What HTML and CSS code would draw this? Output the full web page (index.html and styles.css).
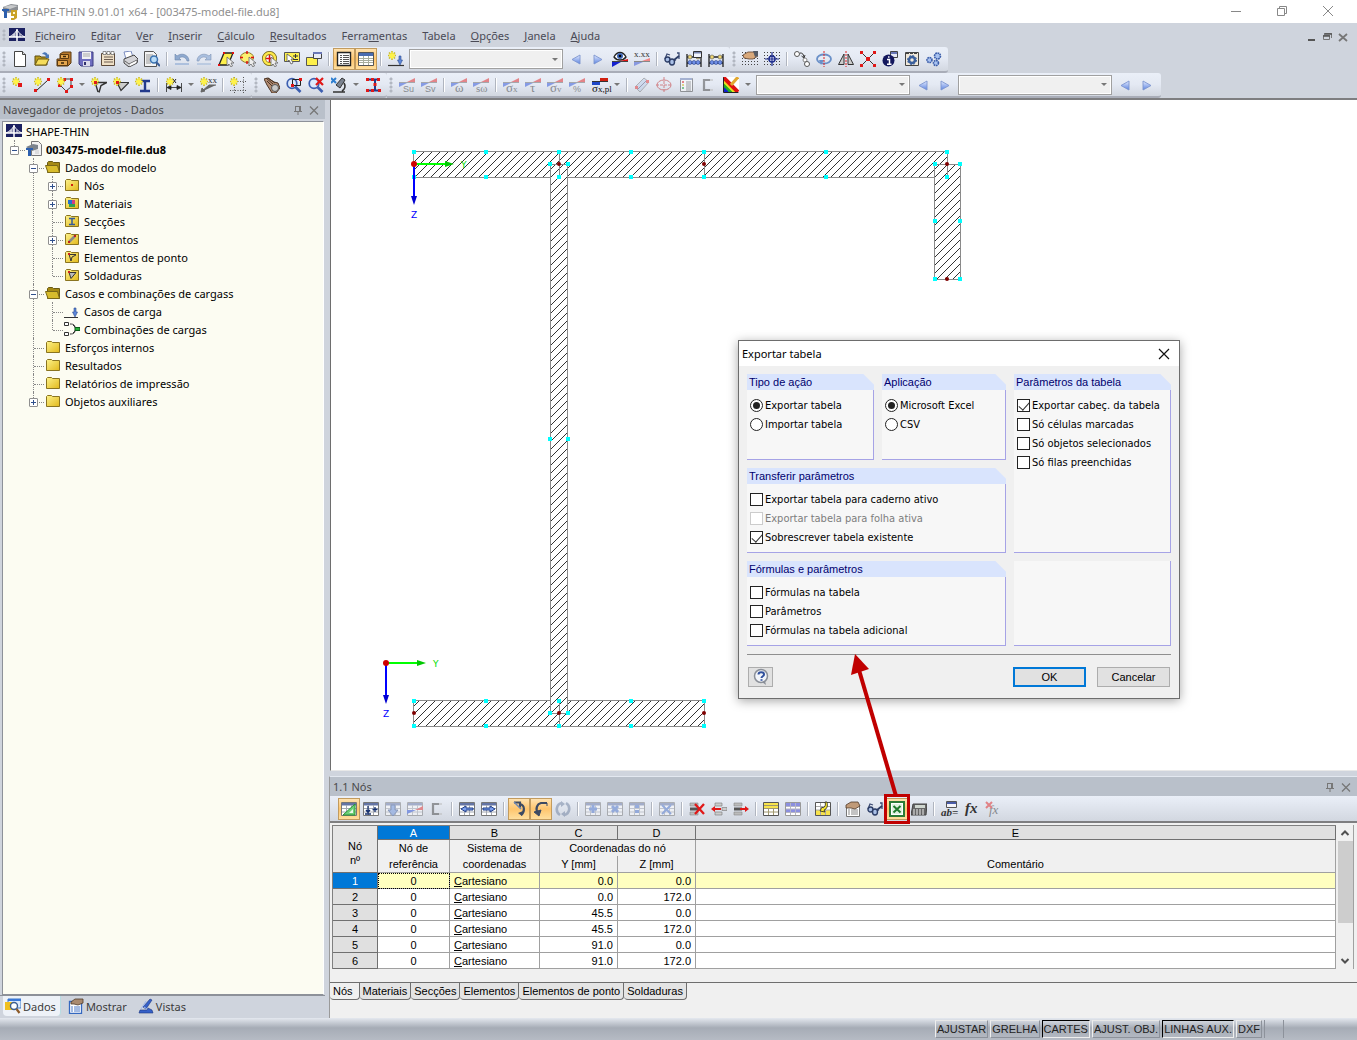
FILE: index.html
```html
<!DOCTYPE html>
<html lang="pt">
<head>
<meta charset="utf-8">
<title>SHAPE-THIN 9.01.01 x64 - [003475-model-file.du8]</title>
<link rel="stylesheet" href="styles.css">
</head>
<body>
<svg class="sprite" aria-hidden="true">
  <defs>
    <linearGradient id="gFold" x1="0" y1="0" x2="1" y2="1"><stop offset="0" stop-color="#fdf28a"/><stop offset="1" stop-color="#e2b91c"/></linearGradient>
    <linearGradient id="gBlue" x1="0" y1="0" x2="0" y2="1"><stop offset="0" stop-color="#e4ebff"/><stop offset="1" stop-color="#5b83e0"/></linearGradient>
    <pattern id="hatch" width="8" height="8" patternUnits="userSpaceOnUse"><path d="M-1 9 9-1M-1 1 1-1M7 9 9 7" stroke="#333" stroke-width="1"/></pattern>
  </defs>
  <symbol id="star" viewBox="0 0 16 16"><path d="M4 0v9M0 4.500h8M1 1.500l6 6M7 1.500l-6 6" stroke="#c9bb2a" stroke-width="1.600"/><path d="M4 1v7M1 4.500h6M2 2.500l4 4M6 2.500l-4 4" stroke="#fff34a" stroke-width="1.300"/></symbol>
  <symbol id="logo" viewBox="0 0 16 16"><path fill="#1c2161" d="M0 1h16v13H0z"/><path d="M0 10h16M8 2v12" stroke="#fff" stroke-width="1.500"/><path d="M8 3C6 6 3 9 0 10M8 3c2 3 5 6 8 7M5 7v3M11 7v3" stroke="#fff" fill="none"/><path d="M8 3C6 6 3 9 1 10h7z" fill="#fff" opacity=".5"/></symbol>
  <symbol id="app" viewBox="0 0 16 16"><path d="M1 3 9 0l7 1v5l-9 3-6-1z" fill="#8b8f94"/><path d="M1 3l8-2 7 1-8 3z" fill="#c8cacc"/><path d="M0 5h7v2H5v7H2V7H0z" fill="#2c5fae"/><path d="M9 6h6v8l-3 2H9v-2h3v-2H9z" fill="#c9a227"/><path d="M11 8h2v2h-2z" fill="#fff5cf"/></symbol>
  <symbol id="new" viewBox="0 0 16 16"><path d="M2.500.500h8l3 3v12h-11z" fill="#fff" stroke="#444"/><path d="M10.500.500v3h3" fill="#ddd" stroke="#444"/></symbol>
  <symbol id="open" viewBox="0 0 16 16"><path d="M1 14V5h5l1 1h6v8z" fill="#b99a1e" stroke="#5c4c10"/><path d="M1 14 4 8h11l-3 6z" fill="#f5dc5a" stroke="#6d5a12"/><path d="M8 3c2-3 5-2 6 1l1-1v4h-4l1-1C12 4 10 3 8 3z" fill="#4a78b8"/></symbol>
  <symbol id="cab" viewBox="0 0 16 16"><path d="M4 3l3-2h8v11l-3 3H1V8h3z" fill="#b97a2c" stroke="#5b3a10"/><path d="M4.500 3.500h8v4h-8zM1.500 9.500h10v5h-10z" fill="#e6a84e" stroke="#5b3a10"/><path d="M7 5.500h3M5 12h3" stroke="#3b260a" stroke-width="1.500"/></symbol>
  <symbol id="save" viewBox="0 0 16 16"><path d="M1 1h14v14H3l-2-2z" fill="#6f6ec0" stroke="#3d3d80"/><path d="M4 1h9v7H4z" fill="#f0f0f4"/><path d="M5 3h7M5 5h7" stroke="#aaa"/><path d="M5 10h7v5H5z" fill="#dcdcec"/><path d="M6 11h2v3H6z" fill="#32326e"/></symbol>
  <symbol id="note" viewBox="0 0 16 16"><path d="M1.500 2.500h13v12h-13z" fill="#efe0c6" stroke="#5c4a3a"/><path d="M3 .500h3v3H3zM7 .500h3v3H7zM11 .500h3v3h-3z" fill="#fff" stroke="#666" stroke-width=".7"/><path d="M4 6h9M4 8.500h9M4 11h9" stroke="#6c5c50"/></symbol>
  <symbol id="print" viewBox="0 0 16 16"><path d="M2 1l7-1 2 6-7 2z" fill="#fff" stroke="#7b8cc0"/><path d="M2 8l10-4 4 4-1 4-8 4-5-4z" fill="#d4d4d8" stroke="#444"/><path d="M3 10l4 3 8-4" stroke="#666" fill="none"/><path d="M8 13l6-3v2l-6 3z" fill="#fff"/></symbol>
  <symbol id="preview" viewBox="0 0 16 16"><path d="M.500.500h9l3 3v12H.500z" fill="#f4f4f4" stroke="#555"/><path d="M2 4h7M2 6h5M2 8h4M2 10h4M2 12h5" stroke="#999"/><circle cx="10" cy="8.500" r="3.500" fill="#b9dcf8" stroke="#3a72b0" stroke-width="1.500"/><path d="M12 11l4 4" stroke="#3a5f98" stroke-width="2.200"/></symbol>
  <symbol id="undo" viewBox="0 0 16 16"><path d="M1 3v6h6L5 7c3-2 7-1 8 3h2C15 4 8 1 3 5z" fill="#8ea9cf" stroke="#6d86ab" stroke-width=".6"/><path d="M1 13h14" stroke="#9db5d8" stroke-width="1.500"/></symbol>
  <symbol id="redo" viewBox="0 0 16 16"><path d="M15 3v6H9l2-2C8 5 4 6 3 10H1C1 4 8 1 13 5z" fill="#a9bfdf" stroke="#8195b5" stroke-width=".6"/><path d="M1 13h14" stroke="#b0c3de" stroke-width="1.500"/></symbol>
  <symbol id="cursor" viewBox="0 0 16 16"><path d="M9 6v9l2-2 2 3 1.500-1-1.500-3h3z" fill="#eee" stroke="#666" stroke-width=".8"/></symbol>
  <symbol id="selpar" viewBox="0 0 16 16"><path d="M1 14 6 2h9l-5 12z" fill="#fdf04c" stroke="#222" stroke-width="1.300"/><path d="M0 13h2v2H0zM5 1h2v2H5zM14 1h2v2h-2z" fill="#e01010"/><use href="#cursor"/></symbol>
  <symbol id="selcirc" viewBox="0 0 16 16"><ellipse cx="7" cy="6.500" rx="6.500" ry="5" fill="#fdf070" stroke="#8a7c30"/><path d="M7 0v3M7 10v3M0 6.500h3M11 6.500h3" stroke="#e01010" stroke-width="1.500"/><use href="#cursor"/></symbol>
  <symbol id="selring" viewBox="0 0 16 16"><circle cx="7.500" cy="7.500" r="5.500" fill="#fff" stroke="#6a5c10" stroke-width="4"/><circle cx="7.500" cy="7.500" r="5.500" fill="none" stroke="#fde84c" stroke-width="2.600"/><path d="M7.500 4v7M4 7.500h7" stroke="#e01010" stroke-width="1.500"/><use href="#cursor"/></symbol>
  <symbol id="selpm" viewBox="0 0 16 16"><path d="M.500 1.500h15v9H.500z" fill="#fdf04c" stroke="#555"/><path d="M9 5h5M11.500 3v4M9 8.500h5" stroke="#333"/><path d="M3 3v8l2-2 2 4 2-1-2-4h3z" fill="#fff" stroke="#555" stroke-width=".8"/></symbol>
  <symbol id="selwin" viewBox="0 0 16 16"><path d="M.500 6.500h11v8H.500z" fill="#fdf04c" stroke="#555"/><path d="M7.500 1.500h8v6h-8z" fill="#e8ecf8" stroke="#444"/><path d="M7 1h9v2H7z" fill="#6a78b8"/></symbol>
  <symbol id="nav" viewBox="0 0 16 16"><path d="M1.500 1.500h13v13h-13z" fill="#fff" stroke="#222" stroke-width="1.400"/><path d="M4 4.500h2M7 4.500h6M4 6.500h2M7 6.500h6M4 8.500h2M7 8.500h6M4 10.500h2M7 10.500h6M4 12.500h2M7 12.500h6" stroke="#555"/></symbol>
  <symbol id="tab" viewBox="0 0 16 16"><path d="M.500 1.500h15v13H.500z" fill="#fff" stroke="#555"/><path d="M1 2h14v3H1z" fill="#4a6cb0"/><path d="M1 7.500h14M1 9.500h14M1 11.500h14M5.500 5v9M10.500 5v9" stroke="#a7ad9e"/></symbol>
  <symbol id="starload" viewBox="0 0 16 16"><use href="#star"/><path d="M0 14.500h16" stroke="#333" stroke-width="1.200"/><path d="M11 5h2v4h1.500L12 14 9.500 9H11z" fill="#5c86d8" stroke="#2b4b90" stroke-width=".6"/></symbol>
  <symbol id="left" viewBox="0 0 16 16"><path d="M12 4v9L4 8.500z" fill="url(#gBlue)" stroke="#7d95cf" stroke-width=".9"/></symbol>
  <symbol id="right" viewBox="0 0 16 16"><path d="M4 4v9l8-4.500z" fill="url(#gBlue)" stroke="#7d95cf" stroke-width=".9"/></symbol>
  <symbol id="wedge" viewBox="0 0 16 16"><path d="M0 5.500h16" stroke="#666"/><path d="M8 5 16 1v4z" fill="#e02020"/><path d="M0 6h8L0 10z" fill="#2a50d8"/></symbol>
  <symbol id="eye" viewBox="0 0 16 16"><path d="M2 6c3-6 9-6 12 0-3 4-9 4-12 0z" fill="#fff" stroke="#222" stroke-width="1.300"/><circle cx="8" cy="5" r="3" fill="#3d65b5"/><circle cx="8" cy="5" r="1.300" fill="#000"/><path d="M0 10.500h16" stroke="#444"/><path d="M8 10l8-2v2z" fill="#e01010"/><path d="M0 11h9l-9 5z" fill="#1420d0"/></symbol>
  <symbol id="lowwedge" viewBox="0 0 16 16"><path d="M0 10.500h16" stroke="#888"/><path d="M8 10l8-3v3z" fill="#f08888"/><path d="M0 11h9l-9 4z" fill="#8898e0"/></symbol>
  <symbol id="glass" viewBox="0 0 16 16"><path d="M1 8 3 3l3 1M9 10l3-1M15 8V2h-2" stroke="#3d4c74" fill="none" stroke-width="1.300"/><circle cx="3.500" cy="8.500" r="2.500" fill="#a9bfe6" stroke="#2c3d66" stroke-width="1.400"/><ellipse cx="8" cy="11" rx="2.500" ry="3" fill="#a9bfe6" stroke="#2c3d66" stroke-width="1.400"/><path d="M10 9l5-4" stroke="#2c3d66" stroke-width="1.800"/></symbol>
  <symbol id="abacus" viewBox="0 0 16 16"><path d="M1 3v13M15 3v13M1 6h14M1 12h14" stroke="#222" stroke-width="1.300"/><g fill="#ecd470" stroke="#555" stroke-width=".6"><circle cx="4" cy="6" r="2"/><circle cx="12" cy="6" r="2"/></g><g fill="#6f8fe8" stroke="#27408c" stroke-width=".6"><circle cx="4" cy="11.500" r="2"/><circle cx="8" cy="11.500" r="2"/><circle cx="12" cy="11.500" r="2"/></g></symbol>
  <symbol id="abawin" viewBox="0 0 16 16"><use href="#abacus"/><path d="M7.500.500h8v6h-8z" fill="#f2f4fa" stroke="#333"/><path d="M8 1h7v1.500H8z" fill="#7886b0"/></symbol>
  <symbol id="grid" viewBox="0 0 16 16"><path d="M0 1.500h16M0 4.500h16M0 7.500h16M0 10.500h16M0 13.500h16" stroke="#444" stroke-dasharray="1 2"/></symbol>
  <symbol id="gridhand" viewBox="0 0 16 16"><use href="#grid"/><path d="M1 4l5-3h9l1 4-5 3H7L2 7z" fill="#d9a97c" stroke="#5f4330" stroke-width=".8"/><path d="M11 0h5v5l-3 1z" fill="#555b66"/></symbol>
  <symbol id="gridtgt" viewBox="0 0 16 16"><use href="#grid"/><circle cx="8" cy="8" r="3" fill="#eef" stroke="#1c2b8c" stroke-width="1.500"/><path d="M8 1v14M1 8h14" stroke="#1c2b8c" stroke-width="1.200"/></symbol>
  <symbol id="move" viewBox="0 0 16 16"><circle cx="3" cy="3" r="2.500" fill="#fff" stroke="#555"/><circle cx="11" cy="9" r="2" fill="#fff" stroke="#888"/><circle cx="13" cy="13" r="2.500" fill="#fff" stroke="#555"/><path d="M6 2c3 0 3 1 4 4M10 7 7.500 5M10 7l1-3" stroke="#333" fill="none"/></symbol>
  <symbol id="rotate" viewBox="0 0 16 16"><ellipse cx="8" cy="8" rx="7" ry="4.500" fill="none" stroke="#6a90c8" stroke-width="1.800"/><path d="M3 9h5l-3 5z" fill="#6a90c8"/><path d="M8 0v16" stroke="#e02020" stroke-dasharray="2 1"/></symbol>
  <symbol id="mirror" viewBox="0 0 16 16"><path d="M.500 13.500 6 3v10.500zM15.500 13.500 10 3v10.500z" fill="#ccc" stroke="#333"/><path d="M8 0v16" stroke="#e02020" stroke-dasharray="2 1"/></symbol>
  <symbol id="xnode" viewBox="0 0 16 16"><path d="M2 2l12 12M14 2 2 14" stroke="#333"/><path d="M0 0h3v3H0zM13 0h3v3h-3zM0 13h3v3H0zM13 13h3v3h-3zM6 6h4v4H6z" fill="#e01818"/></symbol>
  <symbol id="info" viewBox="0 0 16 16"><path d="M8.500.500h7v6h-7z" fill="#e8ecf8" stroke="#444"/><path d="M9 1h6v2H9z" fill="#6a78b8"/><circle cx="6.500" cy="9.500" r="6" fill="#14185e"/><path d="M5 8.500h2.500V13M5 13.200h4.500M6 6h1.500" stroke="#fff" stroke-width="1.500" fill="none"/></symbol>
  <symbol id="gearbox" viewBox="0 0 16 16"><path d="M1.500 1.500h13v13h-13z" fill="#f0e8da" stroke="#444"/><path d="M2 2h3M6 2h3M10 2h3" stroke="#444" stroke-width="2"/><circle cx="8" cy="9" r="3" fill="none" stroke="#3a5f9c" stroke-width="2.500"/><circle cx="8" cy="9" r="4.500" fill="none" stroke="#3a5f9c" stroke-dasharray="2 1.500"/></symbol>
  <symbol id="gears" viewBox="0 0 16 16"><g fill="#a8c2f0" stroke="#3a5ca8" stroke-width="1.600" stroke-dasharray="1.700 .6"><circle cx="3.500" cy="9" r="2.500"/><circle cx="11.500" cy="5" r="3"/><circle cx="10" cy="12" r="2.500"/></g></symbol>
  <symbol id="snode" viewBox="0 0 16 16"><use href="#star"/><path d="M6 6h4v4H6z" fill="#e01818"/></symbol>
  <symbol id="sline" viewBox="0 0 16 16"><path d="M2 14 14 3" stroke="#222"/><path d="M0 12h3v3H0zM13 1h3v3h-3z" fill="#e01818"/><use href="#star"/></symbol>
  <symbol id="spoly" viewBox="0 0 16 16"><path d="M3 8l6 6 5-4V2H7" stroke="#444" fill="none"/><path d="M6 1h3v3H6zM13 1h3v3h-3zM13 8h3v3h-3zM8 13h3v3H8zM1 7h3v3H1z" fill="#e01818"/><use href="#star"/></symbol>
  <symbol id="spoint" viewBox="0 0 16 16"><path d="M2 5.500h14l-6 3-2 7M4 5l3 10" stroke="#333" fill="none" stroke-width="1.400"/><use href="#star"/><path d="M3 4h3v3H3z" fill="#e01818"/></symbol>
  <symbol id="sweld" viewBox="0 0 16 16"><path d="M4 5.500h12l-8 8z" stroke="#333" fill="#ccc" stroke-width="1.200"/><use href="#star"/><path d="M3 4h3v3H3z" fill="#e01818"/></symbol>
  <symbol id="sbeam" viewBox="0 0 16 16"><path d="M5 4h10M5 14h10M10 4v10" stroke="#233a8c" stroke-width="2.400"/><use href="#star"/></symbol>
  <symbol id="sdim" viewBox="0 0 16 16"><path d="M.500 6v9M15.500 6v9M1 10.500h14M1 10.500l4-2v4zM15 10.500l-4-2v4z" stroke="#222" fill="#222" stroke-width=".8"/><path d="M7 2l3 4M10 2 7 6" stroke="#222"/><use href="#star"/></symbol>
  <symbol id="sxx" viewBox="0 0 16 16"><path d="M1 15 9 8h7M1 15l1-4 3 3z" stroke="#666" fill="#666"/><use href="#star"/></symbol>
  <symbol id="sbox" viewBox="0 0 16 16"><path d="M4.500 0v16M13.500 0v16M0 4.500h16M0 13.500h16" stroke="#555" stroke-dasharray="1 1.500"/><use href="#star"/></symbol>
  <symbol id="hand" viewBox="0 0 16 16"><path d="M0 2 4 1l6 4 4 1 2 5-4 5H8L3 8z" fill="#b48d74" stroke="#4a3424"/><path d="M2 1l7 6M4 1l7 5M3 4l5 5" stroke="#4a3424"/><circle cx="11" cy="11" r="3.500" fill="#c9c9c9" stroke="#555"/></symbol>
  <symbol id="mag" viewBox="0 0 16 16"><circle cx="6" cy="6.500" r="4.800" fill="#dce9fb" stroke="#3c5eb0" stroke-width="1.700"/><path d="M9.500 10l5 5" stroke="#3c5eb0" stroke-width="2.600"/></symbol>
  <symbol id="zoomw" viewBox="0 0 16 16"><use href="#mag"/><path d="M6.500 2.500h8v6h-8z" fill="none" stroke="#222"/><path d="M13 1h3v3h-3zM5 7h3v3H5z" fill="#e01818"/></symbol>
  <symbol id="zoomx" viewBox="0 0 16 16"><use href="#mag"/><path d="M8 1l7 7M15 1 8 8" stroke="#e01818" stroke-width="2.200"/></symbol>
  <symbol id="scope" viewBox="0 0 16 16"><path d="M11 1l3 2-5 8-4-3z" fill="#7b8390" stroke="#333"/><path d="M2 15h12M13 6c2 3 1 6-2 8" stroke="#333" stroke-width="1.600" fill="none"/><path d="M0 1l5 5M5 1 0 6" stroke="#2f7fd0" stroke-width="2"/></symbol>
  <symbol id="ired" viewBox="0 0 16 16"><path d="M3 2.500h10M3 13.500h12M10 2v12" stroke="#233a8c" stroke-width="2"/><path d="M1 1h3v3H1zM12 1h3v3h-3zM6 1h3v3H6zM1 12h3v3H1zM13 12h3v3h-3zM6 12h3v3H6zM8.500 6h3v3h-3z" fill="#e01818"/></symbol>
  <symbol id="sigpl" viewBox="0 0 16 16"><path d="M8 1h8v3H8z" fill="#d02010"/><path d="M0 5h8v3H0z" fill="#2048c8"/><path d="M0 4.500h16" stroke="#333"/></symbol>
  <symbol id="plate" viewBox="0 0 16 16"><path d="M1 10 10 1l5 4-9 10z" fill="#b9cbe8" stroke="#777"/><path d="M4 12l9-9" stroke="#557"/><path d="M1 9h3v3H1zM12 3h3v3h-3z" fill="#e03030"/></symbol>
  <symbol id="ell" viewBox="0 0 16 16"><ellipse cx="8" cy="8" rx="7" ry="5" fill="none" stroke="#c02020"/><path d="M8 0v16M0 8h16" stroke="#c02020" stroke-dasharray="3 1"/></symbol>
  <symbol id="rep" viewBox="0 0 16 16"><path d="M2.500 1.500h12v13h-12z" fill="#fff" stroke="#444"/><path d="M2 1h12v2H2z" fill="#667ab0"/><path d="M4 5h2" stroke="#e02020" stroke-width="2"/><path d="M4 8h2" stroke="#d8c020" stroke-width="2"/><path d="M4 11h2" stroke="#20a040" stroke-width="2"/><path d="M8 5h5M8 7h5M8 9h5M8 11h5M8 13h5" stroke="#555"/></symbol>
  <symbol id="chan" viewBox="0 0 16 16"><path d="M13 3H4v10h9" stroke="#444" stroke-width="2.200" fill="none"/><path d="M10 3h3M10 13h3" stroke="#bbb" stroke-width="2.200"/></symbol>
  <symbol id="rain" viewBox="0 0 16 16"><path fill="#fff" d="M0 0h16v16H0z"/><path d="M0 4 12 16" stroke="#e8e020" stroke-width="4"/><path d="M0 0l15 15" stroke="#e01010" stroke-width="4"/><path d="M0 8l8 8" stroke="#20b020" stroke-width="3.500"/><path d="M0 12l4 4" stroke="#1020d0" stroke-width="4"/><path d="M8 8 15 0" stroke="#e2a830" stroke-width="3"/><path d="M.500.500v15h15" stroke="#222" fill="none"/></symbol>
  <symbol id="fold" viewBox="0 0 16 16"><path d="M1.500 13.500v-10l1-1h4l1 1h7v10z" fill="url(#gFold)" stroke="#8a7420"/></symbol>
  <symbol id="foldo" viewBox="0 0 16 16"><path d="M2.500 13.500v-10l1-1h4l1 1h6v10z" fill="#a58a14" stroke="#6a5a14"/><path d="M.500 6.500h12l2 7H3z" fill="#d8bc2c" stroke="#7a6818"/></symbol>
  <symbol id="f1" viewBox="0 0 16 16"><use href="#fold"/><path d="M7 7h2v2H7z" fill="#d02010"/></symbol>
  <symbol id="f2" viewBox="0 0 16 16"><use href="#fold"/><path d="M4 5h4v4H4z" fill="#2470d0"/><path d="M8 5h3v4H8z" fill="#d04080"/><path d="M5 9h6v3H5z" fill="#30a050"/></symbol>
  <symbol id="f3" viewBox="0 0 16 16"><use href="#fold"/><path d="M5 5.500h6M5 11.500h6M8 5v7" stroke="#355a98" stroke-width="1.500"/></symbol>
  <symbol id="f4" viewBox="0 0 16 16"><use href="#fold"/><path d="M5 11l6-6" stroke="#888" stroke-width="2.500"/><path d="M4 10h2v2H4zM10 4h2v2h-2z" fill="#c02020"/></symbol>
  <symbol id="f5" viewBox="0 0 16 16"><use href="#fold"/><path d="M4 5.500h8M5 5l2 7 1-4 4-2" stroke="#333" fill="none"/><path d="M4 4h2v2H4z" fill="#d02020"/></symbol>
  <symbol id="f6" viewBox="0 0 16 16"><use href="#fold"/><path d="M5 5.500h7l-5 6z" stroke="#333" fill="#bbb"/><path d="M4 4h2v2H4z" fill="#d02020"/></symbol>
  <symbol id="file" viewBox="0 0 16 16"><path d="M5.500.500h7l3 3v11h-10z" fill="#f2f2f2" stroke="#777"/><path d="M0 6 7 3l5 1v4l-6 2z" fill="#7c838c"/><path d="M0 7h7v2H5v6H2V9H0z" fill="#2c5fae"/><path d="M9 9h4v4H9z" fill="#ddd"/></symbol>
  <symbol id="load" viewBox="0 0 16 16"><path d="M0 14.500h14" stroke="#333"/><path d="M10 5h2v4h1.500L11 14 8.500 9H10z" fill="#5c86d8" stroke="#2b4b90" stroke-width=".6"/></symbol>
  <symbol id="comb" viewBox="0 0 16 16"><path d="M.500 1.500h4v3h-4zM.500 11.500h4v3h-4z" fill="#fff" stroke="#333"/><path d="M6 3c4 0 5 1 5 4M6 13c4 0 5-1 5-4M9 4l3 3M9 12l3-3" stroke="#333" fill="none"/><path d="M11 6.500h5v3h-5z" fill="#28b038" stroke="#0c5c18"/></symbol>
  <symbol id="tgrid" viewBox="0 0 16 16"><path d="M.500 1.500h15v13H.500z" fill="#fff" stroke="#777"/><path d="M1 2h14v2.500H1z" fill="#6474a4"/><path d="M1 7.500h14M1 11h14M5.500 4v10M10.500 4v10" stroke="#a5a9b2"/></symbol>
  <symbol id="t1" viewBox="0 0 16 16"><use href="#tgrid"/><path d="M2 14 14 3v11z" fill="#6fd078" stroke="#2a9434"/><path d="M8 12l4-4v4z" fill="#e9f8e9"/></symbol>
  <symbol id="t2" viewBox="0 0 16 16"><use href="#tgrid"/><path d="M5 5v6M3 9l2 2.500L7 9M2 13h6M12 6v5M9.500 8.500h5" stroke="#16306e" stroke-width="1.300" fill="none"/></symbol>
  <symbol id="t3" viewBox="0 0 16 16"><use href="#tgrid"/><path d="M6 4h4v5h3l-5 6-5-6h3z" fill="#6f94dc" stroke="#37518c"/></symbol>
  <symbol id="t4" viewBox="0 0 16 16"><use href="#tgrid"/><path d="M8 9 16 5v4z" fill="#e03030"/><path d="M0 9h9l-9 4z" fill="#2a50d8"/></symbol>
  <symbol id="t5" viewBox="0 0 16 16"><use href="#tgrid"/><path d="M2 8l5-3v2h7v2H7v2z" fill="#7da0ee" stroke="#213e88"/></symbol>
  <symbol id="t6" viewBox="0 0 16 16"><use href="#tgrid"/><path d="M14 8 9 5v2H2v2h7v2z" fill="#7da0ee" stroke="#213e88"/></symbol>
  <symbol id="a1" viewBox="0 0 16 16"><path d="M3 1.500h6v5M9 3c5 1 5 8 1 11" fill="none" stroke="#3c4a63" stroke-width="2.200"/><path d="M3 1 10 8" stroke="#7388b0" stroke-width="1.500"/><path d="M7 12l5-2-1 5z" fill="#3c4a63"/></symbol>
  <symbol id="a2" viewBox="0 0 16 16"><path d="M14 2H8C4 3 2 8 5 12" fill="none" stroke="#3c4a63" stroke-width="2.200"/><path d="M14 2v3M1 11l7-2-2 6z" stroke="#3c4a63" fill="#3c4a63"/></symbol>
  <symbol id="a3" viewBox="0 0 16 16"><path d="M7 2C1 3 0 11 5 14M9 14c6-1 7-9 2-12" fill="none" stroke="#6d7f9e" stroke-width="2.600"/><path d="M6 0l4 3-4 3zM10 10v6l-4-3z" fill="#6d7f9e"/></symbol>
  <symbol id="t7" viewBox="0 0 16 16"><use href="#tgrid"/><path d="M8 4v8M4 8h8" stroke="#4d74cc" stroke-width="3"/></symbol>
  <symbol id="t8" viewBox="0 0 16 16"><use href="#tgrid"/><path d="M5 5l6 6M11 5l-6 6" stroke="#4d74cc" stroke-width="3"/></symbol>
  <symbol id="t9" viewBox="0 0 16 16"><use href="#tgrid"/><path d="M6 4h4v3H6zM6 9h4v3H6z" fill="#4d74cc"/></symbol>
  <symbol id="t10" viewBox="0 0 16 16"><use href="#tgrid"/><path d="M3 4l9 9M12 4l-9 9" stroke="#4d74cc" stroke-width="2"/></symbol>
  <symbol id="rows" viewBox="0 0 16 16"><path d="M1 2h8v3H1zM1 11h8v3H1z" fill="#bbb" stroke="#888" stroke-width=".6"/><path d="M1 6.500h8v3H1z" fill="#555"/></symbol>
  <symbol id="r1" viewBox="0 0 16 16"><use href="#rows"/><path d="M6 3l9 10M15 3 6 13" stroke="#e01818" stroke-width="2.300"/></symbol>
  <symbol id="r2" viewBox="0 0 16 16"><path d="M4 2h7v3H4zM4 11h7v3H4zM11 6.500h5v3h-5z" fill="#ccc" stroke="#777" stroke-width=".6"/><path d="M0 8l4-3v2h6v2H4v2z" fill="#e01818"/></symbol>
  <symbol id="r3" viewBox="0 0 16 16"><use href="#rows"/><path d="M16 8l-4-3v2H7v2h5v2z" fill="#e01818"/></symbol>
  <symbol id="y1" viewBox="0 0 16 16"><path d="M.500 1.500h15v13H.500z" fill="#fff" stroke="#555"/><path d="M1 2h14v5H1z" fill="#f7e34c"/><path d="M1 4.500h14M1 7.500h14M1 11h14M5.500 7v7M10.500 7v7" stroke="#a09870"/></symbol>
  <symbol id="y2" viewBox="0 0 16 16"><path d="M.500 1.500h15v13H.500z" fill="#fff" stroke="#999"/><path d="M1 2h14v3H1zM1 8h14v3H1z" fill="#8b8fe0"/><path d="M1 5.500h14M1 8h14M1 11.500h14M5.500 2v12M10.500 2v12" stroke="#b5b5c5"/></symbol>
  <symbol id="y3" viewBox="0 0 16 16"><path d="M.500 1.500h15v13H.500z" fill="#fff" stroke="#555"/><path d="M1 9h14v5H1z" fill="#f7e34c"/><path d="M1 5.500h14M1 9h14M5.500 2v12M10.500 2v12" stroke="#aaa"/><path d="M12 1c1 4 0 7-3 8l1 2-5-1 2-4 1 1c2-1 3-3 2-6z" fill="#fbe92c" stroke="#222" stroke-width=".8"/></symbol>
  <symbol id="prop" viewBox="0 0 16 16"><path d="M1.500 4.500h13v11h-13z" fill="#fff" stroke="#777"/><path d="M3 9h2M6 9h7M3 11h2M6 11h7M3 13h2M6 13h7" stroke="#888"/><path d="M1 4l5-3h7l2 4-5 3-4-1H1z" fill="#c09a78" stroke="#4f3a2a" stroke-width=".8"/></symbol>
  <symbol id="propb" viewBox="0 0 16 16"><path d="M1.500 3.500h12v12h-12z" fill="#fff" stroke="#3468c0" stroke-width="1.300"/><path d="M3 9h2M6 9h6M3 11h2M6 11h6M3 13h2M6 13h6" stroke="#4a78c8"/><path d="M3 4l4-3h8v4l-5 2-4-1H3z" fill="#a98a70" stroke="#4f3a2a" stroke-width=".8"/></symbol>
  <symbol id="xls" viewBox="0 0 16 16"><path d="M1 1h14v14H1z" fill="#fff" stroke="#2c7a35" stroke-width="2"/><path d="M3 3h10v10H3z" fill="#dff0df"/><path d="M4.500 5l7 6.500M11.500 5l-7 6.500" stroke="#1f7a2c" stroke-width="2"/></symbol>
  <symbol id="calc" viewBox="0 0 16 16"><path d="M2 3h14l-1 11H0z" fill="#666" stroke="#444"/><path d="M4 4h10v3H4z" fill="#cfd6cf"/><path d="M2 9h12M2 11h12M2 13h12" stroke="#eee" stroke-dasharray="2 1"/></symbol>
  <symbol id="win" viewBox="0 0 16 16"><path d="M5.500.500h10v6h-10z" fill="#f4f4fa" stroke="#555"/><path d="M6 1h9v2H6z" fill="#4a5ca8"/></symbol>
  <symbol id="find" viewBox="0 0 16 16"><path d="M3 1h13v9H3z" fill="#dce9fa" stroke="#3a78c8"/><path d="M3 1h13v2H3z" fill="#3a78d8"/><path d="M0 4h7v8H0z" fill="#f0c020"/><circle cx="9" cy="8" r="3.500" fill="#fff" stroke="#3c5e90" stroke-width="1.400"/><path d="M11.500 11l3 4" stroke="#8c5a28" stroke-width="2.200"/></symbol>
  <symbol id="mic" viewBox="0 0 16 16"><path d="M12 1l2 1-6 9-3-2zM2 12h7l1-2 4 2 1 3H1z" fill="#3560c8" stroke="#1c3580" stroke-width=".6"/><path d="M6 9l3 2M3 11l5-8" stroke="#9db8f0"/></symbol>
  <symbol id="pin" viewBox="0 0 16 16"><path d="M5.500 4v5M5.500 4.500h5M9.500 4v5M10.500 4v5M4 9.500h8M8 10v3" stroke="#777" fill="none"/></symbol>
  <symbol id="close" viewBox="0 0 16 16"><path d="M4 4.500l8 8M12 4.500l-8 8" stroke="#777" stroke-width="1.300"/></symbol>
</svg>

<header class="titlebar">
  <svg class="ic"><use href="#app"/></svg>
  <h1>SHAPE-THIN 9.01.01 x64 - [003475-model-file.du8]</h1>
  <div class="winbtns">
    <button aria-label="Minimizar"><svg class="ic" viewBox="0 0 16 16"><path d="M3 7.500h10" stroke="#888"/></svg></button>
    <button aria-label="Restaurar"><svg class="ic" viewBox="0 0 16 16"><path d="M3.500 4.500h7v7h-7zM5.500 4V2.500h7v7H11" stroke="#888" fill="none"/></svg></button>
    <button aria-label="Fechar"><svg class="ic" viewBox="0 0 16 16"><path d="M3 2l10 10M13 2 3 12" stroke="#888" fill="none"/></svg></button>
  </div>
</header>

<nav class="menubar">
  <span class="grip"></span>
  <svg class="ic"><use href="#logo"/></svg>
  <ul>
    <li><a href="#"><u>F</u>icheiro</a></li><li><a href="#">E<u>d</u>itar</a></li><li><a href="#">V<u>e</u>r</a></li><li><a href="#"><u>I</u>nserir</a></li><li><a href="#"><u>C</u>álculo</a></li><li><a href="#"><u>R</u>esultados</a></li><li><a href="#">Ferra<u>m</u>entas</a></li><li><a href="#">Tabela</a></li><li><a href="#"><u>O</u>pções</a></li><li><a href="#"><u>J</u>anela</a></li><li><a href="#"><u>A</u>juda</a></li>
  </ul>
  <div class="childbtns">
    <button aria-label="Minimizar janela"><svg class="ic" viewBox="0 0 16 16"><path d="M5 13h7" stroke="#555" stroke-width="2"/></svg></button>
    <button aria-label="Restaurar janela"><svg class="ic" viewBox="0 0 16 16"><path d="M4.500 8.500h6v4h-6zM6 6.500h6.500V11" stroke="#777" fill="none"/><path d="M5 7h8M4 9h7" stroke="#555" stroke-width="1.300"/></svg></button>
    <button aria-label="Fechar janela"><svg class="ic" viewBox="0 0 16 16"><path d="M4 7l8 7M12 7l-8 7" stroke="#777" stroke-width="1.800"/></svg></button>
  </div>
</nav>

<div class="toolrow">
  <div class="toolbar">
    <span class="grip"></span>
    <button class="tb" aria-label="Novo"><svg class="ic"><use href="#new"/></svg></button>
    <button class="tb" aria-label="Abrir"><svg class="ic"><use href="#open"/></svg></button>
    <button class="tb" aria-label="Gestor"><svg class="ic"><use href="#cab"/></svg></button>
    <button class="tb" aria-label="Guardar"><svg class="ic"><use href="#save"/></svg></button>
    <button class="tb" aria-label="Notas"><svg class="ic"><use href="#note"/></svg></button>
    <button class="tb" aria-label="Imprimir"><svg class="ic"><use href="#print"/></svg></button>
    <button class="tb" aria-label="Pré-visualizar"><svg class="ic"><use href="#preview"/></svg></button>
    <span class="sep"></span>
    <button class="tb" aria-label="Anular"><svg class="ic"><use href="#undo"/></svg></button>
    <button class="tb" aria-label="Refazer"><svg class="ic"><use href="#redo"/></svg></button>
    <button class="tb" aria-label="Selecionar por paralelogramo"><svg class="ic"><use href="#selpar"/></svg></button>
    <button class="tb" aria-label="Selecionar por elipse"><svg class="ic"><use href="#selcirc"/></svg></button>
    <button class="tb" aria-label="Selecionar por anel"><svg class="ic"><use href="#selring"/></svg></button>
    <button class="tb" aria-label="Adicionar à seleção"><svg class="ic"><use href="#selpm"/></svg></button>
    <button class="tb" aria-label="Seleção especial"><svg class="ic"><use href="#selwin"/></svg></button>
    <span class="sep"></span>
    <button class="tb on" aria-label="Navegador"><svg class="ic"><use href="#nav"/></svg></button>
    <button class="tb on" aria-label="Tabelas"><svg class="ic"><use href="#tab"/></svg></button>
    <span class="sep"></span>
    <button class="tb" aria-label="Novo caso de carga"><svg class="ic"><use href="#starload"/></svg></button>
    <select class="combo" aria-label="Caso de carga"><option></option></select>
    <button class="tb" aria-label="Anterior"><svg class="ic"><use href="#left"/></svg></button>
    <button class="tb" aria-label="Seguinte"><svg class="ic"><use href="#right"/></svg></button>
    <button class="tb" aria-label="Mostrar resultados"><svg class="ic"><use href="#eye"/></svg></button>
    <button class="tb" aria-label="Mostrar valores"><svg class="ic" viewBox="0 0 16 16"><use href="#lowwedge"/><text x="0" y="6" class="glyph g9">x.xx</text></svg></button>
    <span class="sep"></span>
    <button class="tb" aria-label="Vista"><svg class="ic"><use href="#glass"/></svg></button>
    <button class="tb" aria-label="Parâmetros de cálculo"><svg class="ic"><use href="#abawin"/></svg></button>
    <button class="tb" aria-label="Calcular"><svg class="ic"><use href="#abacus"/></svg></button>
  </div>
  <div class="toolbar last">
    <span class="grip"></span>
    <button class="tb" aria-label="Definir grelha"><svg class="ic"><use href="#gridhand"/></svg></button>
    <button class="tb" aria-label="Ajustar à grelha"><svg class="ic"><use href="#gridtgt"/></svg></button>
    <span class="sep"></span>
    <button class="tb" aria-label="Mover"><svg class="ic"><use href="#move"/></svg></button>
    <button class="tb" aria-label="Rodar"><svg class="ic"><use href="#rotate"/></svg></button>
    <button class="tb" aria-label="Espelhar"><svg class="ic"><use href="#mirror"/></svg></button>
    <button class="tb" aria-label="Ligar elementos"><svg class="ic"><use href="#xnode"/></svg></button>
    <button class="tb" aria-label="Informação"><svg class="ic"><use href="#info"/></svg></button>
    <button class="tb" aria-label="Configurações"><svg class="ic"><use href="#gearbox"/></svg></button>
    <button class="tb" aria-label="Opções"><svg class="ic"><use href="#gears"/></svg></button>
  </div>
</div>

<div class="toolrow second">
  <div class="toolbar">
    <span class="grip"></span>
    <button class="tb" aria-label="Novo nó"><svg class="ic"><use href="#snode"/></svg></button>
    <button class="tb" aria-label="Nova linha"><svg class="ic"><use href="#sline"/></svg></button>
    <button class="tb split" aria-label="Nova polilinha"><svg class="ic"><use href="#spoly"/></svg></button><button class="drop" aria-label="Mais linhas"></button>
    <button class="tb" aria-label="Novo elemento de ponto"><svg class="ic"><use href="#spoint"/></svg></button>
    <button class="tb" aria-label="Nova soldadura"><svg class="ic"><use href="#sweld"/></svg></button>
    <button class="tb" aria-label="Nova secção"><svg class="ic"><use href="#sbeam"/></svg></button>
    <span class="sep"></span>
    <button class="tb split" aria-label="Nova cota"><svg class="ic"><use href="#sdim"/></svg></button><button class="drop" aria-label="Mais cotas"></button>
    <button class="tb" aria-label="Novo comentário"><svg class="ic" viewBox="0 0 16 16"><use href="#sxx"/><text x="8" y="6" class="glyph g9">xx</text></svg></button>
    <span class="sep"></span>
    <button class="tb" aria-label="Linhas auxiliares"><svg class="ic"><use href="#sbox"/></svg></button>
  </div>
  <div class="toolbar">
    <span class="grip"></span>
    <button class="tb" aria-label="Mover vista"><svg class="ic"><use href="#hand"/></svg></button>
    <button class="tb" aria-label="Zoom janela"><svg class="ic"><use href="#zoomw"/></svg></button>
    <button class="tb" aria-label="Mostrar tudo"><svg class="ic"><use href="#zoomx"/></svg></button>
    <button class="tb split" aria-label="Vista anterior"><svg class="ic"><use href="#scope"/></svg></button><button class="drop" aria-label="Mais vistas"></button>
    <button class="tb" aria-label="Modo de visualização"><svg class="ic"><use href="#ired"/></svg></button>
  </div>
  <div class="toolbar last">
    <span class="grip"></span>
    <button class="tb" disabled aria-label="Su"><svg class="ic" viewBox="0 0 16 16"><use href="#wedge"/><text x="4" y="15" class="glyph sans">Su</text></svg></button>
    <button class="tb" disabled aria-label="Sv"><svg class="ic" viewBox="0 0 16 16"><use href="#wedge"/><text x="4" y="15" class="glyph sans">Sv</text></svg></button>
    <span class="sep"></span>
    <button class="tb" disabled aria-label="Ómega"><svg class="ic" viewBox="0 0 16 16"><use href="#wedge"/><text x="4" y="15" class="glyph g13">ω</text></svg></button>
    <button class="tb" disabled aria-label="S ómega"><svg class="ic" viewBox="0 0 16 16"><use href="#wedge"/><text x="3" y="15" class="glyph g11">sω</text></svg></button>
    <span class="sep"></span>
    <button class="tb" disabled aria-label="Sigma x"><svg class="ic" viewBox="0 0 16 16"><use href="#wedge"/><text x="3" y="15" class="glyph g13">σ<tspan class="g9">x</tspan></text></svg></button>
    <button class="tb" disabled aria-label="Tau"><svg class="ic" viewBox="0 0 16 16"><use href="#wedge"/><text x="5" y="15" class="glyph g13">τ</text></svg></button>
    <button class="tb" disabled aria-label="Sigma v"><svg class="ic" viewBox="0 0 16 16"><use href="#wedge"/><text x="3" y="15" class="glyph g13">σ<tspan class="g9">v</tspan></text></svg></button>
    <button class="tb" disabled aria-label="Aproveitamento"><svg class="ic" viewBox="0 0 16 16"><use href="#wedge"/><text x="4" y="15" class="glyph sans">%</text></svg></button>
    <button class="tb split" aria-label="Sigma x plástico"><svg class="ic" viewBox="0 0 16 16"><use href="#sigpl"/><text x="0" y="15" class="glyph g11 dark">σ<tspan class="g9">x,pl</tspan></text></svg></button><button class="drop" aria-label="Mais tensões"></button>
    <span class="sep"></span>
    <button class="tb" disabled aria-label="Elementos"><svg class="ic"><use href="#plate"/></svg></button>
    <button class="tb" disabled aria-label="Elipse de inércia"><svg class="ic"><use href="#ell"/></svg></button>
    <button class="tb" disabled aria-label="Relatório"><svg class="ic"><use href="#rep"/></svg></button>
    <button class="tb" disabled aria-label="Perfil"><svg class="ic"><use href="#chan"/></svg></button>
    <button class="tb split" aria-label="Cores"><svg class="ic"><use href="#rain"/></svg></button><button class="drop" aria-label="Mais cores"></button>
    <select class="combo" aria-label="Resultado"><option></option></select>
    <button class="tb" aria-label="Resultado anterior"><svg class="ic"><use href="#left"/></svg></button>
    <button class="tb" aria-label="Resultado seguinte"><svg class="ic"><use href="#right"/></svg></button>
    <select class="combo" aria-label="Local"><option></option></select>
    <button class="tb" aria-label="Local anterior"><svg class="ic"><use href="#left"/></svg></button>
    <button class="tb" aria-label="Local seguinte"><svg class="ic"><use href="#right"/></svg></button>
  </div>
</div>

<main>
  <aside>
    <div class="panelhead"><h2>Navegador de projetos - Dados</h2><svg class="ic"><use href="#pin"/></svg><svg class="ic"><use href="#close"/></svg></div>
    <div class="tree">
      <div class="row root"><svg class="ic"><use href="#logo"/></svg>SHAPE-THIN</div>
      <ul>
        <li><div class="row"><i class="exp"></i><svg class="ic"><use href="#file"/></svg><b>003475-model-file.du8</b></div>
          <ul>
            <li><div class="row"><i class="exp"></i><svg class="ic"><use href="#foldo"/></svg>Dados do modelo</div>
              <ul>
                <li><div class="row"><i class="exp plus"></i><svg class="ic"><use href="#f1"/></svg>Nós</div></li>
                <li><div class="row"><i class="exp plus"></i><svg class="ic"><use href="#f2"/></svg>Materiais</div></li>
                <li><div class="row"><i class="gap"></i><svg class="ic"><use href="#f3"/></svg>Secções</div></li>
                <li><div class="row"><i class="exp plus"></i><svg class="ic"><use href="#f4"/></svg>Elementos</div></li>
                <li><div class="row"><i class="gap"></i><svg class="ic"><use href="#f5"/></svg>Elementos de ponto</div></li>
                <li><div class="row"><i class="gap"></i><svg class="ic"><use href="#f6"/></svg>Soldaduras</div></li>
              </ul></li>
            <li><div class="row"><i class="exp"></i><svg class="ic"><use href="#foldo"/></svg>Casos e combinações de cargass</div>
              <ul>
                <li><div class="row"><i class="gap"></i><svg class="ic"><use href="#load"/></svg>Casos de carga</div></li>
                <li><div class="row"><i class="gap"></i><svg class="ic"><use href="#comb"/></svg>Combinações de cargas</div></li>
              </ul></li>
            <li><div class="row"><i class="gap"></i><svg class="ic"><use href="#fold"/></svg>Esforços internos</div></li>
            <li><div class="row"><i class="gap"></i><svg class="ic"><use href="#fold"/></svg>Resultados</div></li>
            <li><div class="row"><i class="gap"></i><svg class="ic"><use href="#fold"/></svg>Relatórios de impressão</div></li>
            <li><div class="row"><i class="exp plus"></i><svg class="ic"><use href="#fold"/></svg>Objetos auxiliares</div></li>
          </ul></li>
      </ul>
    </div>
    <div class="sidetabs">
      <button class="sel"><svg class="ic"><use href="#find"/></svg>Dados</button>
      <button><svg class="ic"><use href="#propb"/></svg>Mostrar</button>
      <button><svg class="ic"><use href="#mic"/></svg>Vistas</button>
    </div>
  </aside>

  <div class="work">
    <div class="canvas">
      <svg class="drawing" aria-label="Secção transversal">
        <g transform="translate(-331 -100)">
          <g fill="url(#hatch)" stroke="#8a8a8a">
            <path d="M413.500 151.500h534v26h-534z"/><path d="M934.500 164.500h26v115h-26z" fill="#fff"/><path d="M934.500 164.500h26v115h-26z"/>
            <path d="M413.500 700.500h291v26h-291z"/><path d="M550.500 164.500h17v549h-17z" fill="#fff"/><path d="M550.500 164.500h17v549h-17z"/>
            <path d="M559.500 152v25M704.500 152v25M559.500 701v25M947.500 152v25" fill="none"/>
          </g>
          <path d="M414 152v0M486 152v0M559 152v0M631 152v0M704 152v0M826 152v0M947 152v0M414 177v0M486 177v0M559 177v0M631 177v0M704 177v0M826 177v0M947 177v0M550 164v0M568 164v0M550 439v0M568 439v0M550 713v0M568 713v0M935 164v0M960 164v0M935 221v0M960 221v0M935 279v0M960 279v0M414 701v0M486 701v0M559 701v0M631 701v0M704 701v0M414 726v0M486 726v0M559 726v0M631 726v0M704 726v0" stroke="#0ff" stroke-width="4" stroke-linecap="square"/>
          <path d="M559 164v0M704 164v0M947 164v0M947 279v0M414 713v0M559 713v0M704 713v0" stroke="#800000" stroke-width="4" stroke-linecap="round"/>
          <g>
            <path d="M414 164h34" stroke="#0f0" stroke-width="2"/><path d="M445 161v6l9-3z" fill="#00c800"/>
            <path d="M414 164v34" stroke="#00f" stroke-width="2"/><path d="M411 196h6l-3 9z" fill="#0000d0"/>
            <circle cx="414" cy="164" r="3" fill="#d00000"/>
            <text x="461" y="168" class="axis ay">Y</text><text x="411" y="218" class="axis az">Z</text>
          </g>
          <g>
            <path d="M386 663h34" stroke="#0f0" stroke-width="2"/><path d="M417 660v6l9-3z" fill="#00c800"/>
            <path d="M386 663v34" stroke="#00f" stroke-width="2"/><path d="M383 695h6l-3 9z" fill="#0000d0"/>
            <circle cx="386" cy="663" r="3" fill="#d00000"/>
            <text x="433" y="667" class="axis ay">Y</text><text x="383" y="717" class="axis az">Z</text>
          </g>
        </g>
      </svg>
    </div>

    <section class="tables">
      <div class="panelhead"><h2>1.1 Nós</h2><svg class="ic"><use href="#pin"/></svg><svg class="ic"><use href="#close"/></svg></div>
      <div class="tabletools">
        <button class="tb on" aria-label="Tabelas de entrada"><svg class="ic"><use href="#t1"/></svg></button>
        <button class="tb" aria-label="Cargas"><svg class="ic"><use href="#t2"/></svg></button>
        <button class="tb" disabled aria-label="Tabela de cargas"><svg class="ic"><use href="#t3"/></svg></button>
        <button class="tb" disabled aria-label="Tabela de resultados"><svg class="ic"><use href="#t4"/></svg></button>
        <button class="tb" disabled aria-label="Perfil"><svg class="ic"><use href="#chan"/></svg></button>
        <span class="sep"></span>
        <button class="tb" aria-label="Tabela anterior"><svg class="ic"><use href="#t5"/></svg></button>
        <button class="tb" aria-label="Tabela seguinte"><svg class="ic"><use href="#t6"/></svg></button>
        <span class="sep"></span>
        <button class="tb on" aria-label="Sincronizar seleção"><svg class="ic"><use href="#a1"/></svg></button>
        <button class="tb on" aria-label="Mostrar na vista"><svg class="ic"><use href="#a2"/></svg></button>
        <button class="tb" disabled aria-label="Atualizar"><svg class="ic"><use href="#a3"/></svg></button>
        <span class="sep"></span>
        <button class="tb" disabled aria-label="Inserir"><svg class="ic"><use href="#t7"/></svg></button>
        <button class="tb" disabled aria-label="Remover"><svg class="ic"><use href="#t8"/></svg></button>
        <button class="tb" disabled aria-label="Dividir"><svg class="ic"><use href="#t9"/></svg></button>
        <span class="sep"></span>
        <button class="tb" disabled aria-label="Eliminar"><svg class="ic"><use href="#t10"/></svg></button>
        <span class="sep"></span>
        <button class="tb" aria-label="Limpar linha"><svg class="ic"><use href="#r1"/></svg></button>
        <button class="tb" aria-label="Inserir linha"><svg class="ic"><use href="#r2"/></svg></button>
        <button class="tb" aria-label="Eliminar linha"><svg class="ic"><use href="#r3"/></svg></button>
        <span class="sep"></span>
        <button class="tb" aria-label="Cabeçalho"><svg class="ic"><use href="#y1"/></svg></button>
        <button class="tb" aria-label="Filtro"><svg class="ic"><use href="#y2"/></svg></button>
        <span class="sep"></span>
        <button class="tb" aria-label="Selecionar em tabela"><svg class="ic"><use href="#y3"/></svg></button>
        <span class="sep"></span>
        <button class="tb" aria-label="Propriedades"><svg class="ic"><use href="#prop"/></svg></button>
        <button class="tb" aria-label="Vista"><svg class="ic"><use href="#glass"/></svg></button>
        <div class="marked">
          <button class="tb on" aria-label="Exportar para Excel"><svg class="ic"><use href="#xls"/></svg></button>
          <svg class="pointer" viewBox="0 0 60 142" aria-hidden="true"><path d="M9 16 46 142" stroke="#c00000" stroke-width="4"/><path d="M5 0 19 15 1 21z" fill="#c00000"/></svg>
        </div>
        <button class="tb" aria-label="Calculadora"><svg class="ic"><use href="#calc"/></svg></button>
        <span class="sep"></span>
        <button class="tb" aria-label="Parâmetros"><svg class="ic" viewBox="0 0 16 16"><use href="#win"/><text x="0" y="15" class="glyph abt">ab=</text></svg></button>
        <button class="tb" aria-label="Fórmula"><svg class="ic" viewBox="0 0 16 16"><text x="2" y="12" class="glyph fxt">fx</text></svg></button>
        <button class="tb" disabled aria-label="Remover fórmula"><svg class="ic" viewBox="0 0 16 16"><text x="4" y="13" class="glyph fxs">fx</text><path d="M1 1l6 6M7 1 1 7" stroke="#e02020" stroke-width="2"/></svg></button>
      </div>
      <div class="sheet">
        <table>
          <colgroup><col class="c0"><col class="ca"><col class="cb"><col class="cc"><col class="cc"><col></colgroup>
          <thead>
            <tr class="letters"><th rowspan="3" class="corner">Nó<br>nº</th><th class="cur">A</th><th>B</th><th>C</th><th>D</th><th>E</th></tr>
            <tr class="h1"><th>Nó de</th><th>Sistema de</th><th colspan="2">Coordenadas do nó</th><th></th></tr>
            <tr class="h2"><th>referência</th><th>coordenadas</th><th>Y [mm]</th><th>Z [mm]</th><th>Comentário</th></tr>
          </thead>
          <tbody>
            <tr class="active"><th>1</th><td>0</td><td><u>C</u>artesiano</td><td>0.0</td><td>0.0</td><td></td></tr>
            <tr><th>2</th><td>0</td><td><u>C</u>artesiano</td><td>0.0</td><td>172.0</td><td></td></tr>
            <tr><th>3</th><td>0</td><td><u>C</u>artesiano</td><td>45.5</td><td>0.0</td><td></td></tr>
            <tr><th>4</th><td>0</td><td><u>C</u>artesiano</td><td>45.5</td><td>172.0</td><td></td></tr>
            <tr><th>5</th><td>0</td><td><u>C</u>artesiano</td><td>91.0</td><td>0.0</td><td></td></tr>
            <tr><th>6</th><td>0</td><td><u>C</u>artesiano</td><td>91.0</td><td>172.0</td><td></td></tr>
          </tbody>
        </table>
        <div class="scroll"><svg class="ic" viewBox="0 0 16 16"><path d="M4.500 10 8 6.500l3.500 3.500" stroke="#505050" stroke-width="2" fill="none"/></svg><span class="thumb"></span><svg class="ic" viewBox="0 0 16 16"><path d="M4.500 6 8 9.500 11.500 6" stroke="#505050" stroke-width="2" fill="none"/></svg></div>
      </div>
      <div class="sheettabs"><button class="sel">Nós</button><button>Materiais</button><button>Secções</button><button>Elementos</button><button>Elementos de ponto</button><button>Soldaduras</button></div>
    </section>
  </div>

  <form class="dialog" role="dialog" aria-labelledby="dlgt">
    <header><h2 id="dlgt">Exportar tabela</h2><button type="button" aria-label="Fechar"><svg class="ic" viewBox="0 0 16 16"><path d="M3 3l10 10M13 3 3 13" stroke="#111" stroke-width="1.200"/></svg></button></header>
    <div class="groups">
      <section class="group g1"><h3>Tipo de ação</h3>
        <label><input type="radio" name="act" checked>Exportar tabela</label>
        <label><input type="radio" name="act">Importar tabela</label></section>
      <section class="group g2"><h3>Aplicação</h3>
        <label><input type="radio" name="app" checked>Microsoft Excel</label>
        <label><input type="radio" name="app">CSV</label></section>
      <section class="group g3"><h3>Parâmetros da tabela</h3>
        <label><input type="checkbox" checked>Exportar cabeç. da tabela</label>
        <label><input type="checkbox">Só células marcadas</label>
        <label><input type="checkbox">Só objetos selecionados</label>
        <label><input type="checkbox">Só filas preenchidas</label></section>
      <section class="group g4"><h3>Transferir parâmetros</h3>
        <label><input type="checkbox">Exportar tabela para caderno ativo</label>
        <label class="off"><input type="checkbox" disabled>Exportar tabela para folha ativa</label>
        <label><input type="checkbox" checked>Sobrescrever tabela existente</label></section>
      <section class="group g5"><h3>Fórmulas e parâmetros</h3>
        <label><input type="checkbox">Fórmulas na tabela</label>
        <label><input type="checkbox">Parâmetros</label>
        <label><input type="checkbox">Fórmulas na tabela adicional</label></section>
      <section class="group g6"></section>
    </div>
    <footer>
      <button type="button" class="help" aria-label="Ajuda"><svg class="ic" viewBox="0 0 16 16"><circle cx="8" cy="7" r="6.500" fill="#f2f5fa" stroke="#8a8f98" stroke-width="1.500"/><path d="M9 13l4 3-1-4z" fill="#8a8f98"/><path d="M5.500 5.500c0-3 5.500-3 5.500 0 0 2-2.500 1.500-2.500 3.500M8.500 10.200v1.600" stroke="#2f4f9c" stroke-width="2" fill="none"/></svg></button>
      <button type="button" class="ok">OK</button><button type="button">Cancelar</button>
    </footer>
  </form>
</main>

<footer class="status">
  <button>AJUSTAR</button><button>GRELHA</button><button class="down">CARTES</button><button>AJUST. OBJ.</button><button class="down">LINHAS AUX.</button><button>DXF</button><span class="cell"></span>
</footer>
</body>
</html>
```

FILE: styles.css
```css
* { box-sizing: border-box; }
body {
  margin: 0;
  height: 100vh;
  display: flex;
  flex-direction: column;
  overflow: hidden;
  background: #cfd4dd;
  font: 11px "Noto Sans", sans-serif;
  color: #3b3b3b;
}
h1, h2, h3 { margin: 0; font-size: 11px; font-weight: 400; }
ul { list-style: none; margin: 0; padding: 0; }
button { border: 0; padding: 0; margin: 0; background: none; font: inherit; color: inherit; }
.sprite { position: absolute; width: 0; height: 0; }
.ic { width: 16px; height: 16px; flex: none; display: block; overflow: visible; }

/* Lettering inside icons */
.glyph { font-family: "Liberation Serif", serif; fill: #333; }
.g9 { font-size: 9px; }
.g11 { font-size: 11px; }
.g13 { font-size: 13px; }
.sans { font: 9px "Liberation Sans", sans-serif; }
.dark { fill: #111; }
.abt { font-size: 11px; font-style: italic; font-weight: 700; }
.fxt { font-size: 15px; font-style: italic; font-weight: 700; }
.fxs { font-size: 13px; font-style: italic; }

/* Title and menu */
.titlebar { height: 23px; flex: none; display: flex; align-items: center; gap: 4px; padding-left: 2px; background: #fff; }
.titlebar h1 { flex: 1; color: #8f8f8f; }
.winbtns { display: flex; padding-right: 6px; }
.winbtns button { width: 46px; display: flex; justify-content: center; }
.menubar { height: 24px; flex: none; display: flex; align-items: center; }
.menubar ul { display: flex; flex: 1; gap: 15px; padding-left: 10px; }
.menubar a { color: #4a4a55; text-decoration: none; }
.childbtns { display: flex; padding-right: 6px; }

/* Toolbars */
.toolrow { height: 26px; flex: none; display: flex; }
.toolrow.second { height: 27px; border-bottom: 2px solid #7e7e80; }
.toolbar { display: flex; align-items: center; padding-right: 3px; background: linear-gradient(#eaeff8, #e4e9f3 50%, #d2d7e0); border-bottom: 2px solid #a9adb8; border-radius: 0 3px 3px 0; }
.grip { width: 9px; height: 16px; flex: none; background: radial-gradient(circle, #b2b7c1 1px, transparent 2px) 2px 0 / 4px 4px repeat-y; }
.menubar .grip { height: 12px; }
.tb { width: 22px; height: 22px; flex: none; display: flex; align-items: center; justify-content: center; }
.tb:disabled .ic { opacity: .5; }
.tb.on { border: 1px solid #c29b5e; background: linear-gradient(#ffe2b0, #ffc56d 50%, #ffdf9e); }
.tb.split { margin-left: 1px; }
.drop { width: 12px; height: 22px; display: flex; align-items: center; justify-content: center; }
.drop::before { content: ""; border: 3px solid transparent; border-top-color: #777; border-bottom: 0; }
.sep { width: 8px; height: 14px; flex: none; background: linear-gradient(#b0b5bf, #b0b5bf) 3px 0 / 1px 100% no-repeat, linear-gradient(#fff, #fff) 4px 0 / 1px 100% no-repeat; }
.combo { appearance: none; width: 154px; height: 20px; margin: 0 2px; border: 1px solid #a0a0a0; border-radius: 0; box-shadow: inset 0 0 0 1px #fff; background: #f0f0f0 url("data:image/svg+xml,%3Csvg xmlns='http://www.w3.org/2000/svg' width='6' height='3'%3E%3Cpath d='M0 0h6L3 3z' fill='%23777'/%3E%3C/svg%3E") right 4px center no-repeat; }

/* Main split */
main { flex: 1; min-height: 0; display: flex; gap: 5px; position: relative; }
.panelhead { height: 19px; flex: none; display: flex; align-items: center; padding: 0 3px; background: #b9c0ca; color: #4a4a4a; }
.panelhead h2 { flex: 1; }
aside { width: 325px; flex: none; display: flex; flex-direction: column; }
.tree { flex: 1; margin: 2px 1px 0 2px; border: 1px solid #8d9199; border-right-color: #fff; background: #fcfcf2; color: #000; padding-left: 3px; }
.row { height: 18px; display: flex; align-items: center; gap: 4px; white-space: nowrap; position: relative; }
.tree ul { padding-left: 4px; }
.tree ul ul { padding-left: 19px; }
.tree li { position: relative; }
.tree li::before { content: ""; position: absolute; left: 4px; top: 0; bottom: 0; border-left: 1px dotted #888; }
.tree li:last-child::before { bottom: auto; height: 10px; }
.tree li > .row::before { content: ""; position: absolute; left: 5px; top: 10px; width: 10px; border-top: 1px dotted #888; }
.exp, .gap { width: 9px; height: 9px; flex: none; margin: 2px 3px 0 0; position: relative; }
.exp { border: 1px solid #8f8f8f; border-radius: 1px; background: linear-gradient(#30508c, #30508c) 1px 3px / 5px 1px no-repeat, #fff; }
.plus { background: linear-gradient(#30508c, #30508c) 1px 3px / 5px 1px no-repeat, linear-gradient(#30508c, #30508c) 3px 1px / 1px 5px no-repeat, #fff; }
.sidetabs { height: 23px; flex: none; display: flex; gap: 5px; padding-left: 3px; border-top: 1px solid #8d9199; }
.sidetabs button { display: flex; align-items: center; gap: 2px; height: 20px; padding: 0 4px 0 2px; }
.sidetabs .sel { border-radius: 0 0 4px 4px; background: #eef2f8; border-right: 1px solid #b8dce2; }

.work { flex: 1; min-width: 0; display: flex; flex-direction: column; gap: 5px; }
.canvas { flex: 1; min-height: 0; background: #fff; border-left: 1px solid #6e6e6e; border-bottom: 1px solid #e8e8e8; }
.drawing { width: 100%; height: 100%; display: block; }
.axis { font: 9px "DejaVu Sans", sans-serif; }
.ay { fill: #0d0; }
.az { fill: #00f; }

/* Tables panel */
.tables { flex: none; height: 242px; margin-left: -1px; display: flex; flex-direction: column; background: #f0f0f0; border-left: 1px solid #9a9a9a; border-top: 1px solid #e3e8f0; }
.tabletools { height: 27px; flex: none; display: flex; align-items: center; padding-left: 8px; background: linear-gradient(#eaeff8, #d2d7e0); border-bottom: 2px solid #7e7e80; }
.marked { position: relative; z-index: 5; width: 22px; height: 22px; display: flex; align-items: center; }
.marked::after { content: ""; position: absolute; inset: -4px -2px; border: 3px solid #c00000; }
.pointer { position: absolute; right: -2px; bottom: 24px; width: 60px; height: 142px; }
.sheet { height: 160px; flex: none; display: flex; align-items: flex-start; gap: 1px; padding: 2px 3px 0 2px; border-bottom: 1px solid #6e6e6e; font-family: "Liberation Sans", sans-serif; color: #000; }
table { flex: 1; table-layout: fixed; border-collapse: separate; border-spacing: 0; border-left: 1px solid #808080; border-top: 1px solid #808080; }
.c0 { width: 45px; }
.ca { width: 72px; }
.cb { width: 90px; }
.cc { width: 78px; }
th, td { height: 16px; padding: 0 4px; line-height: 14px; font-weight: 400; border-right: 1px solid #a0a0a0; border-bottom: 1px solid #a0a0a0; overflow: hidden; }
td { background: #fff; text-align: right; }
td:nth-child(2) { text-align: center; }
td:nth-child(3) { text-align: left; }
tbody th { background: #e0e0e0; border-color: #707070; }
.active td { background: #ffffc0; }
.active td:nth-child(2) { outline: 1px dotted #000; outline-offset: -1px; }
.active th { background: #0078d7; color: #fff; }
.letters th { height: 14px; line-height: 12px; background: #e0e0e0; border-color: #707070; }
.letters .cur { background: #0078d7; color: #fff; }
.letters .corner { padding-top: 8px; line-height: 14px; background: #e6e6e6; }
.h1 th { height: 16px; border-bottom: 0; }
.h2 th { height: 17px; }
.scroll { width: 17px; align-self: stretch; margin-bottom: 13px; display: flex; flex-direction: column; align-items: center; border-right: 1px solid #a0a0a0; }
.thumb { width: 15px; height: 82px; margin-bottom: auto; background: #cdcdcd; }
.sheettabs { display: flex; font-family: "Liberation Sans", sans-serif; color: #000; }
.sheettabs button { height: 17px; padding: 0 3px; border: 1px solid #6e6e6e; border-top: 0; border-left: 0; border-radius: 0 0 4px 4px; background: #e4e4e4; }
.sheettabs .sel { padding: 0 6px 0 3px; background: #f0f0f0; }

/* Export dialog */
.dialog { position: absolute; left: 738px; bottom: 319px; width: 442px; border: 1px solid #6d6d6d; background: #f0f0f0; box-shadow: 0 2px 10px rgba(0, 0, 0, .35); color: #000; font-family: "DejaVu Sans Condensed", "Liberation Sans", sans-serif; }
.dialog header { height: 25px; display: flex; align-items: center; justify-content: space-between; padding: 0 7px 0 3px; background: #fff; font-family: "Noto Sans", sans-serif; }
.groups { display: grid; grid-template-columns: 127px 124px 1fr; grid-template-rows: 86px 85px 85px; gap: 8px; padding: 8px; }
.group { background: #f7f7f7; border-right: 1px solid #a6a3e6; border-bottom: 1px solid #a6a3e6; }
.group h3 { height: 16px; margin: 0 -1px 6px 0; padding-left: 2px; line-height: 16px; background: linear-gradient(225deg, #f0f0f0 7px, #d9e4fd 8px); color: #00006e; font-family: "Liberation Sans", sans-serif; }
.g3 { grid-column: 3; grid-row: 1 / 3; }
.g4, .g5 { grid-column: 1 / 3; }
.group label { display: flex; align-items: center; gap: 2px; height: 19px; padding-left: 3px; white-space: nowrap; }
.off { color: #7d7d7d; }
input { appearance: none; width: 13px; height: 13px; margin: 0; flex: none; border: 1px solid #222; background: #fff; position: relative; }
input:disabled { border-color: #ccc; }
input[type="radio"] { border-radius: 50%; }
input[type="radio"]:checked::after { content: ""; position: absolute; inset: 2px; border-radius: 50%; background: #222; }
input[type="checkbox"]:checked::after { content: ""; position: absolute; left: 3px; top: 0; width: 5px; height: 9px; border: solid #333; border-width: 0 1px 1px 0; transform: rotate(42deg); }
.dialog footer { display: flex; gap: 11px; margin: 0 8px; padding: 12px 1px 11px; border-top: 1px solid #8f8f8f; font-family: "Liberation Sans", sans-serif; }
.dialog footer button { width: 73px; height: 20px; border: 1px solid #adadad; background: #e1e1e1; }
.dialog footer .help { width: 25px; margin-right: auto; display: flex; align-items: center; justify-content: center; }
.dialog footer .ok { border: 2px solid #0078d7; }

/* Status bar */
.status { height: 22px; flex: none; display: flex; justify-content: flex-end; gap: 2px; padding: 2px 73px 2px 0; background: linear-gradient(#e4e8ef, #a6acb6 45%, #b6bbc4); font-family: "Liberation Sans", sans-serif; color: #222; }
.status button { padding: 0 1px; border: 1px solid #8d929b; border-left-color: #eee; border-top-color: #e8e8e8; }
.status .down { border-color: #000 #eee #eee #000; }
.cell { width: 20px; border-right: 1px solid #8d929b; border-left: 1px solid #8d929b; }
```
